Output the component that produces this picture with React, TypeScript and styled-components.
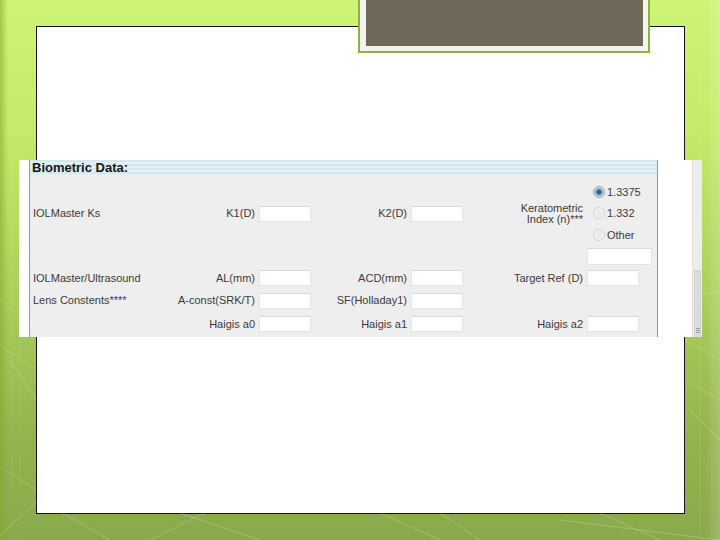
import React from 'react';
import styled, { createGlobalStyle } from 'styled-components';

const GlobalStyle = createGlobalStyle`
  html, body {
    margin: 0;
    padding: 0;
    background: #9cbf52;
  }
  * {
    box-sizing: border-box;
  }
`;

const Stage = styled.div`
  position: relative;
  width: 720px;
  height: 540px;
  overflow: hidden;
  padding-top: 26px;
  font-family: 'Liberation Sans', Arial, sans-serif;
  background:
    linear-gradient(90deg, rgba(120, 170, 40, 0.55) 0px, rgba(120, 170, 40, 0) 8px),
    linear-gradient(270deg, rgba(255, 255, 255, 0.18) 0px, rgba(255, 255, 255, 0) 14px),
    linear-gradient(180deg, #cdf474 0%, #c3ea68 25%, #aacf5b 55%, #94b44e 80%, #8aa94b 100%);
`;

const Decor = styled.svg`
  position: absolute;
  inset: 0;
  pointer-events: none;
`;

const TitleBox = styled.div`
  position: absolute;
  top: 0;
  left: 358px;
  width: 292px;
  height: 53px;
  border: 2px solid #8db33c;
  border-top: none;
  background: #f3f3ef;
  padding: 0 5px 5px 6px;
  z-index: 2;
`;

const TitleFill = styled.div`
  width: 100%;
  height: 100%;
  background: #6f6757;
`;

const Frame = styled.div`
  margin-left: 36px;
  width: 649px;
  height: 488px;
  background: #ffffff;
  border: 1.5px solid #141414;
  padding-top: 133px;
`;

const Shot = styled.div`
  margin-left: -18px;
  width: 683px;
  height: 177px;
  display: flex;
  background: #ffffff;
`;

const Gutter = styled.div`
  width: 10px;
  background: #ffffff;
`;

const Panel = styled.div`
  width: 629px;
  background: #eeeeee;
  border-left: 1px solid #62a9c9;
  border-right: 1px solid #62a9c9;
  display: flex;
  flex-direction: column;
`;

const Header = styled.div`
  height: 16px;
  padding-left: 2px;
  font-size: 13px;
  line-height: 16px;
  font-weight: bold;
  color: #161616;
  background: repeating-linear-gradient(
    180deg,
    #d3e8ef 0px,
    #d3e8ef 2px,
    #e4f1f5 2px,
    #e4f1f5 4px
  );
`;

const Grid = styled.div`
  margin-top: 5px;
  padding-left: 3px;
  display: grid;
  grid-template-columns: 120px 106px 52px 100px 52px 124px 70px;
  grid-template-rows: 65px 20px 24px 21px 26px;
  align-items: center;
  font-size: 11px;
  color: #3b3b3b;
`;

const Label = styled.div<{ right?: boolean; col: number; row: number }>`
  grid-column: ${({ col }) => col};
  grid-row: ${({ row }) => row};
  text-align: ${({ right }) => (right ? 'right' : 'left')};
  padding-right: ${({ right }) => (right ? '4px' : '0')};
  white-space: nowrap;
  line-height: 13px;
`;

const StackLabel = styled(Label)`
  line-height: 11px;
  margin-top: 1px;
`;

const Field = styled.div<{ col: number; row: number; wide?: boolean }>`
  grid-column: ${({ col }) => col};
  grid-row: ${({ row }) => row};
  width: ${({ wide }) => (wide ? '65px' : '52px')};
  height: ${({ wide }) => (wide ? '17px' : '16px')};
  background: #ffffff;
  border: 1px solid #e4e4e4;
  border-top-color: #dadada;
`;

const RadioGroup = styled.div`
  grid-column: 7;
  grid-row: 1;
  align-self: start;
  display: flex;
  flex-direction: column;
  padding-left: 6px;
`;

const RadioRow = styled.div`
  height: 21.5px;
  display: flex;
  align-items: center;
  gap: 2px;
  color: #3b3b3b;
`;

const RadioDot = styled.span<{ checked?: boolean }>`
  width: 12px;
  height: 12px;
  border-radius: 50%;
  border: 1px solid ${({ checked }) => (checked ? '#8aa4b8' : '#d4d4d4')};
  background: ${({ checked }) =>
    checked
      ? 'radial-gradient(circle, #2c4f72 0px, #3f6c96 2px, #8fb3cf 3.5px, #e9eef2 5px)'
      : 'radial-gradient(circle, #e6e6e6 0px, #f2f2f2 5px)'};
`;

const Side = styled.div`
  flex: 1;
  display: flex;
  justify-content: flex-end;
  background: #ffffff;
`;

const Track = styled.div`
  width: 10px;
  height: 100%;
  background: #ececec;
  border-left: 1px solid #e2e2e2;
  display: flex;
  flex-direction: column;
  justify-content: flex-end;
`;

const Thumb = styled.div`
  height: 67px;
  margin: 0 1px;
  border: 1px solid #cfcfcf;
  border-bottom: none;
  border-radius: 2px 2px 0 0;
  background: linear-gradient(90deg, #e4e4e4, #d6d6d6 60%, #e0e0e0);
  display: flex;
  flex-direction: column;
  justify-content: flex-end;
  align-items: center;
  gap: 1px;
  padding-bottom: 4px;
`;

const Grip = styled.span`
  width: 4px;
  height: 1px;
  background: #9c9c9c;
`;

const rows: Array<[string, string, string, string, string]> = [
  ['IOLMaster/Ultrasound', 'AL(mm)', 'ACD(mm)', 'Target Ref (D)', 'field'],
  ['Lens Constents****', 'A-const(SRK/T)', 'SF(Holladay1)', '', ''],
  ['', 'Haigis a0', 'Haigis a1', 'Haigis a2', 'field'],
];

const App = () => {
  return (
    <>
      <GlobalStyle />
      <Stage>
        <Decor width="720" height="540" viewBox="0 0 720 540">
          <g stroke="rgba(255,255,255,0.2)" strokeWidth="1" fill="none">
            <path d="M0 300 L36 330 M0 345 L36 370 M6 470 L36 490 M10 360 L36 400" />
            <path d="M0 535 L40 500 L110 540 M150 540 L240 495 M180 513 L260 540" />
            <path d="M380 513 L440 540 M440 513 L480 540 M560 520 L720 540 M600 513 L660 540" />
            <path d="M685 300 L720 290 M685 340 L720 360 M690 410 L720 440 M685 380 L720 400" />
            <path d="M20 0 L20 540 M12 0 L12 540" stroke="rgba(255,255,255,0.06)" />
            <path d="M700 0 L700 540 M712 0 L712 540" stroke="rgba(255,255,255,0.08)" />
          </g>
        </Decor>
        <TitleBox>
          <TitleFill />
        </TitleBox>
        <Frame>
          <Shot>
            <Gutter />
            <Panel>
              <Header>Biometric Data:</Header>
              <Grid>
                <Label col={1} row={1}>IOLMaster Ks</Label>
                <Label col={2} row={1} right>K1(D)</Label>
                <Field col={3} row={1} />
                <Label col={4} row={1} right>K2(D)</Label>
                <Field col={5} row={1} />
                <StackLabel col={6} row={1} right>
                  Keratometric
                  <br />
                  Index (n)***
                </StackLabel>
                <RadioGroup>
                  <RadioRow>
                    <RadioDot checked />
                    1.3375
                  </RadioRow>
                  <RadioRow>
                    <RadioDot />
                    1.332
                  </RadioRow>
                  <RadioRow>
                    <RadioDot />
                    Other
                  </RadioRow>
                </RadioGroup>
                <Field col={7} row={2} wide />
                {rows.map(([first, a, b, c, last], i) => (
                  <React.Fragment key={a}>
                    {first && <Label col={1} row={i + 3}>{first}</Label>}
                    <Label col={2} row={i + 3} right>{a}</Label>
                    <Field col={3} row={i + 3} />
                    <Label col={4} row={i + 3} right>{b}</Label>
                    <Field col={5} row={i + 3} />
                    {c && <Label col={6} row={i + 3} right>{c}</Label>}
                    {last && <Field col={7} row={i + 3} />}
                  </React.Fragment>
                ))}
              </Grid>
            </Panel>
            <Side>
              <Track>
                <Thumb>
                  <Grip />
                  <Grip />
                  <Grip />
                </Thumb>
              </Track>
            </Side>
          </Shot>
        </Frame>
      </Stage>
    </>
  );
};

export default App;
